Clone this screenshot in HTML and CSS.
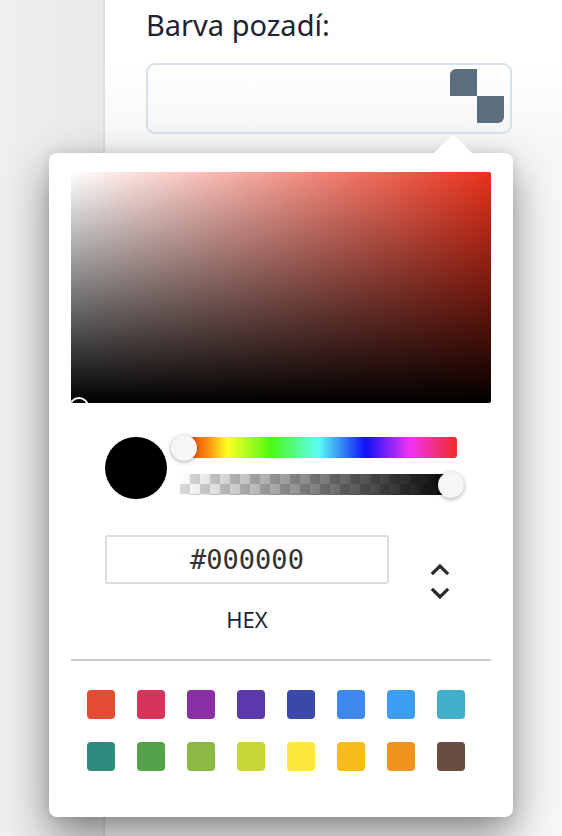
FILE: index.html
```html
<!DOCTYPE html>
<html lang="cs">
<head>
<meta charset="utf-8">
<title>Barva pozadí</title>
<link rel="stylesheet" href="styles.css">
</head>
<body>
<div class="page">
  <aside class="sidebar"></aside>
  <main class="main">
    <label class="field-label">Barva pozadí:</label>
    <div class="color-field">
      <span class="swatch-icon"><span class="sq sq-a"></span><span class="sq sq-b"></span></span>
    </div>
  </main>
</div>

<div class="picker">
  <div class="picker-arrow"></div>
  <div class="saturation">
    <span class="sat-pointer"></span>
  </div>
  <div class="controls">
    <div class="preview"></div>
    <div class="sliders">
      <div class="hue"><span class="thumb thumb-hue"></span></div>
      <div class="alpha"><div class="alpha-fill"></div><span class="thumb thumb-alpha"></span></div>
    </div>
  </div>
  <div class="hex-row">
    <div class="hex-col">
      <input class="hex-input" type="text" value="#000000">
      <div class="hex-label">HEX</div>
    </div>
    <div class="toggle">
      <svg width="20" height="40" viewBox="0 0 20 40">
        <polyline points="3,12 10,5 17,12" fill="none" stroke="#2b2b2b" stroke-width="3.2" stroke-linecap="square"/>
        <polyline points="3,29 10,36 17,29" fill="none" stroke="#2b2b2b" stroke-width="3.2" stroke-linecap="square"/>
      </svg>
    </div>
  </div>
  <div class="divider"></div>
  <div class="swatches">
    <span class="sw c1"></span><span class="sw c2"></span><span class="sw c3"></span><span class="sw c4"></span>
    <span class="sw c5"></span><span class="sw c6"></span><span class="sw c7"></span><span class="sw c8"></span>
    <span class="sw c9"></span><span class="sw c10"></span><span class="sw c11"></span><span class="sw c12"></span>
    <span class="sw c13"></span><span class="sw c14"></span><span class="sw c15"></span><span class="sw c16"></span>
  </div>
</div>
</body>
</html>
```
FILE: styles.css
```css
html, body {
  margin: 0;
  padding: 0;
  width: 562px;
  height: 836px;
  overflow: hidden;
  background: #ffffff;
  font-family: "Noto Sans", "Open Sans", sans-serif;
}

.page {
  display: flex;
  height: 836px;
}

.sidebar {
  width: 103px;
  flex: 0 0 103px;
  background: linear-gradient(to right, #efefef, #e9e9e9);
  border-right: 2px solid #dedede;
}

.main {
  flex: 1;
  padding: 5px 0 0 41px;
  background: linear-gradient(to bottom, #ffffff 0, #ffffff 60px, #f7f7f7 140px);
}

.field-label {
  display: block;
  font-size: 29px;
  line-height: 40px;
  color: #1e2235;
}

.color-field {
  margin-top: 18px;
  width: 356px;
  height: 59px;
  border: 2px solid #d7dfee;
  border-radius: 9px;
  background: linear-gradient(to bottom, #ffffff, #f6f6f6);
  display: flex;
  justify-content: flex-end;
  align-items: flex-start;
  padding: 4px 6px 4px 0;
  box-sizing: content-box;
}

.swatch-icon {
  display: grid;
  grid-template-columns: 27px 27px;
  grid-template-rows: 27px 27px;
  width: 54px;
  height: 54px;
}

.sq {
  background: #5b6e7b;
}

.sq-a {
  grid-column: 1;
  grid-row: 1;
  border-top-left-radius: 6px;
}

.sq-b {
  grid-column: 2;
  grid-row: 2;
  border-bottom-right-radius: 6px;
}

/* popup */
.picker {
  position: absolute;
  left: 49px;
  top: 153px;
  width: 464px;
  height: 664px;
  box-sizing: border-box;
  padding: 19px 22px 0 22px;
  background: #ffffff;
  border-radius: 8px;
  box-shadow: 0 18px 44px rgba(0, 0, 0, 0.45), 0 0 12px rgba(0, 0, 0, 0.1);
}

.picker-arrow {
  position: absolute;
  top: -19px;
  left: 384px;
  width: 0;
  height: 0;
  border-left: 20px solid transparent;
  border-right: 20px solid transparent;
  border-bottom: 20px solid #ffffff;
}

.saturation {
  position: relative;
  height: 231px;
  border-radius: 2px;
  overflow: hidden;
  background:
    linear-gradient(to top, #000000, rgba(0, 0, 0, 0)),
    linear-gradient(to right, #ffffff, #e9311b);
}

.sat-pointer {
  position: absolute;
  left: -2px;
  bottom: -14px;
  width: 16px;
  height: 16px;
  border: 2px solid #ffffff;
  border-radius: 50%;
}

.controls {
  display: flex;
  align-items: flex-start;
  margin-top: 34px;
  padding-left: 34px;
}

.preview {
  width: 62px;
  height: 62px;
  border-radius: 50%;
  background: #000000;
  flex: 0 0 62px;
}

.sliders {
  margin-left: 13px;
  width: 277px;
  display: flex;
  flex-direction: column;
  gap: 16px;
}

.hue {
  position: relative;
  height: 21px;
  border-radius: 3px;
  background: linear-gradient(to right,
    #f01e0c 0%, #fa8c10 10%, #ffff22 17%, #4cfa16 33%, #5cfcf6 50%, #1010f8 67%, #f234f4 83%, #ee2c26 100%);
}

.alpha {
  position: relative;
  height: 21px;
  background-color: #ffffff;
  background-image:
    linear-gradient(45deg, #d9d9d9 25%, transparent 25%, transparent 75%, #d9d9d9 75%),
    linear-gradient(45deg, #d9d9d9 25%, transparent 25%, transparent 75%, #d9d9d9 75%);
  background-size: 20px 20px;
  background-position: 0 0, 10px 10px;
}

.alpha-fill {
  position: absolute;
  inset: 0;
  background: linear-gradient(to right, rgba(0, 0, 0, 0), #000000);
}

.thumb {
  position: absolute;
  top: 50%;
  width: 26px;
  height: 26px;
  margin-top: -13px;
  border-radius: 50%;
  background: #f6f6f6;
  box-shadow: 0 1px 4px rgba(0, 0, 0, 0.35);
}

.thumb-hue {
  left: -9px;
}

.thumb-alpha {
  right: -7px;
}

.hex-row {
  display: flex;
  align-items: flex-start;
  margin-top: 36px;
  padding-left: 34px;
}

.hex-col {
  display: flex;
  flex-direction: column;
  align-items: center;
  width: 284px;
}

.hex-input {
  width: 284px;
  height: 49px;
  box-sizing: border-box;
  border: 2px solid #dcdcdc;
  border-radius: 3px;
  font-family: "DejaVu Sans Mono", monospace;
  font-size: 27px;
  color: #333333;
  text-align: center;
  padding: 0;
  outline: none;
}

.hex-label {
  margin-top: 22px;
  font-size: 22px;
  line-height: 26px;
  color: #1e2235;
}

.toggle {
  margin-left: 41px;
  margin-top: 26px;
  width: 20px;
  height: 40px;
}

.toggle svg {
  display: block;
}

.divider {
  margin-top: 27px;
  height: 2px;
  background: #cdcdcd;
}

.swatches {
  display: grid;
  grid-template-columns: repeat(8, 28px);
  column-gap: 22px;
  row-gap: 23px;
  margin-top: 29px;
  padding-left: 16px;
}

.sw {
  width: 28px;
  height: 29px;
  border-radius: 4px;
}

.c1 { background: #e34c35; }
.c2 { background: #d6335b; }
.c3 { background: #8a2ea5; }
.c4 { background: #5b38ab; }
.c5 { background: #3c48a9; }
.c6 { background: #3f89ec; }
.c7 { background: #3d9df0; }
.c8 { background: #41afca; }
.c9 { background: #318a7e; }
.c10 { background: #54a34a; }
.c11 { background: #8bb944; }
.c12 { background: #c8d736; }
.c13 { background: #fde73a; }
.c14 { background: #f6bc1e; }
.c15 { background: #f1941e; }
.c16 { background: #6a4c40; }
```
